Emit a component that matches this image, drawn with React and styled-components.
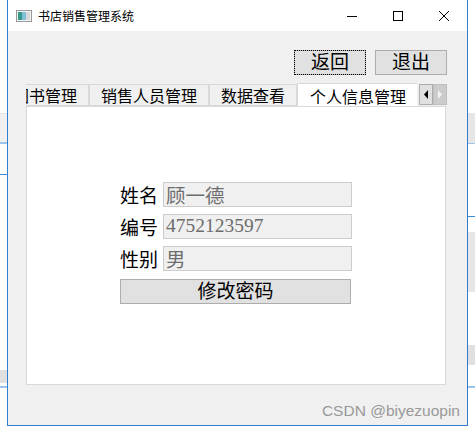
import styled, { createGlobalStyle } from "styled-components";

const GlobalStyle = createGlobalStyle`
  html, body {
    margin: 0;
    padding: 0;
    background: #ffffff;
  }
  * {
    box-sizing: border-box;
  }
`;

const CJK = `"Liberation Serif", "Noto Sans CJK SC", serif`;
const UI = `"Noto Sans CJK SC", "Liberation Sans", sans-serif`;

const Desktop = styled.div`
  width: 475px;
  height: 433px;
  display: flex;
  background:
    linear-gradient(#e6e6e6, #e6e6e6) 0 113px / 7px 1px no-repeat,
    linear-gradient(#f0f0f0, #f0f0f0) 0 114px / 7px 28px no-repeat,
    linear-gradient(#9cc3ea, #9cc3ea) 0 142px / 7px 2px no-repeat,
    linear-gradient(#3c8ad8, #3c8ad8) 0 174px / 7px 1px no-repeat,
    linear-gradient(#e0e0e0, #e0e0e0) 0 370px / 7px 13px no-repeat,
    linear-gradient(#9cc3ea, #9cc3ea) 0 386px / 7px 2px no-repeat,
    linear-gradient(#e6e6e6, #e6e6e6) 468px 113px / 7px 30px no-repeat,
    linear-gradient(#9cc3ea, #9cc3ea) 468px 142px / 7px 2px no-repeat,
    linear-gradient(#3c8ad8, #3c8ad8) 468px 216px / 7px 1px no-repeat,
    linear-gradient(#e6e6e6, #e6e6e6) 468px 232px / 7px 60px no-repeat,
    linear-gradient(#e0e0e0, #e0e0e0) 468px 345px / 7px 20px no-repeat,
    linear-gradient(#9cc3ea, #9cc3ea) 468px 386px / 7px 2px no-repeat,
    #ffffff;
`;

const Window = styled.div`
  margin-left: 7px;
  width: 461px;
  height: 426px;
  border: 1px solid #2f7fd0;
  border-top: none;
  display: flex;
  flex-direction: column;
  background: #f0f0f0;
`;

const TitleBar = styled.div`
  height: 31px;
  background: #ffffff;
  display: flex;
  align-items: center;
  padding-left: 8px;
  flex-shrink: 0;
`;

const TitleText = styled.span`
  font-family: ${UI};
  font-size: 12px;
  color: #000;
  margin-left: 6px;
  margin-top: -1px;
  flex: 1;
`;

const Controls = styled.div`
  display: flex;
  height: 100%;
`;

const Control = styled.div`
  width: 46px;
  height: 31px;
  display: flex;
  align-items: center;
  justify-content: center;
`;

const Client = styled.div`
  flex: 1;
  display: flex;
  flex-direction: column;
  padding: 19px 20px 0 18px;
  position: relative;
`;

const TopButtons = styled.div`
  display: flex;
  justify-content: flex-end;
  gap: 9px;
`;

const WinButton = styled.button`
  width: ${(p) => p.$w || 72}px;
  height: 25px;
  background: #e1e1e1;
  border: 1px solid #adadad;
  padding: 0;
  font-family: ${CJK};
  font-size: 19px;
  line-height: 1;
  color: #000;
  display: flex;
  align-items: center;
  justify-content: center;
  outline: ${(p) => (p.$focus ? "1px dotted #000" : "none")};
  outline-offset: -1px;
`;

const TabWidget = styled.div`
  margin-top: 8px;
  width: 421px;
  display: flex;
  flex-direction: column;
`;

const TabBar = styled.div`
  display: flex;
  align-items: flex-end;
  height: 23px;
  position: relative;
  z-index: 1;
`;

const TabStrip = styled.div`
  display: flex;
  overflow: hidden;
  width: 391px;
  align-items: flex-end;
  height: 24px;
  flex-shrink: 0;
`;

const Tab = styled.div`
  flex-shrink: 0;
  height: ${(p) => (p.$active ? 24 : 22)}px;
  margin-bottom: ${(p) => (p.$active ? -1 : 0)}px;
  padding: 0 ${(p) => p.$pad || 11}px;
  background: ${(p) => (p.$active ? "#ffffff" : "#f0f0f0")};
  border: 1px solid #d9d9d9;
  border-bottom: ${(p) => (p.$active ? "none" : "1px solid #d9d9d9")};
  border-left: ${(p) => (p.$first ? "none" : "1px solid #d9d9d9")};
  margin-left: ${(p) => (p.$shift ? p.$shift : 0)}px;
  font-family: ${UI};
  font-size: 16px;
  line-height: 20px;
  color: #000;
  display: flex;
  align-items: center;
  white-space: nowrap;
`;

const Scroller = styled.div`
  display: flex;
  margin-left: 2px;
  margin-bottom: 1px;
`;

const ScrollBtn = styled.div`
  width: 14px;
  height: 21px;
  background: ${(p) => (p.$disabled ? "#cccccc" : "#e1e1e1")};
  border: 1px solid ${(p) => (p.$disabled ? "#bfbfbf" : "#adadad")};
  display: flex;
  align-items: center;
  justify-content: center;
`;

const Panel = styled.div`
  width: 420px;
  height: 279px;
  background: #ffffff;
  border: 1px solid #d9d9d9;
  display: flex;
  align-items: center;
  justify-content: center;
  padding-bottom: 7px;
`;

const Form = styled.div`
  display: grid;
  grid-template-columns: 43px 189px;
  grid-auto-rows: 25px;
  row-gap: 7px;
  width: 232px;
`;

const Label = styled.div`
  font-family: ${CJK};
  font-size: 19px;
  color: #000;
  display: flex;
  align-items: center;
`;

const Field = styled.div`
  background: #f0f0f0;
  border: 1px solid #cccccc;
  font-family: ${CJK};
  font-size: 19.5px;
  color: #6d6d6d;
  display: flex;
  align-items: center;
  padding-left: 2px;
`;

const FullButton = styled(WinButton)`
  grid-column: 1 / span 2;
  width: 231px;
  margin-top: 1px;
`;

const Watermark = styled.div`
  position: absolute;
  right: 7px;
  bottom: 5px;
  font-family: "Liberation Sans", "DejaVu Sans", sans-serif;
  font-size: 15.5px;
  color: #999999;
`;

const fields = [
  { label: "姓名", value: "顾一德" },
  { label: "编号", value: "4752123597" },
  { label: "性别", value: "男" },
];

function AppIcon() {
  return (
    <svg width="16" height="14" viewBox="0 0 16 14">
      <rect x="0.5" y="1.5" width="15" height="11" fill="#f4f4f4" stroke="#9a9a9a" />
      <rect x="2" y="3" width="4" height="8" fill="#3a9a8a" />
      <rect x="6" y="3" width="4" height="8" fill="#7fbfd8" />
      <rect x="10" y="3" width="4" height="8" fill="#d8d8d8" />
    </svg>
  );
}

export default function App() {
  return (
    <>
      <GlobalStyle />
      <Desktop>
        <Window>
          <TitleBar>
            <AppIcon />
            <TitleText>书店销售管理系统</TitleText>
            <Controls>
              <Control>
                <svg width="12" height="12" viewBox="0 0 12 12">
                  <line x1="1" y1="6.5" x2="11" y2="6.5" stroke="#000" />
                </svg>
              </Control>
              <Control>
                <svg width="12" height="12" viewBox="0 0 12 12">
                  <rect x="1.5" y="1.5" width="9" height="9" fill="none" stroke="#000" />
                </svg>
              </Control>
              <Control>
                <svg width="12" height="12" viewBox="0 0 12 12">
                  <path d="M1 1 L11 11 M11 1 L1 11" stroke="#000" />
                </svg>
              </Control>
            </Controls>
          </TitleBar>
          <Client>
            <TopButtons>
              <WinButton $focus>返回</WinButton>
              <WinButton>退出</WinButton>
            </TopButtons>
            <TabWidget>
              <TabBar>
                <TabStrip>
                  <Tab $first $shift={-24}>图书管理</Tab>
                  <Tab>销售人员管理</Tab>
                  <Tab>数据查看</Tab>
                  <Tab $active $pad={12}>个人信息管理</Tab>
                </TabStrip>
                <Scroller>
                  <ScrollBtn>
                    <svg width="6" height="9" viewBox="0 0 6 9">
                      <path d="M5 0 L1 4.5 L5 9 Z" fill="#000" />
                    </svg>
                  </ScrollBtn>
                  <ScrollBtn $disabled>
                    <svg width="6" height="9" viewBox="0 0 6 9">
                      <path d="M1 0 L5 4.5 L1 9 Z" fill="#f4f4f4" />
                    </svg>
                  </ScrollBtn>
                </Scroller>
              </TabBar>
              <Panel>
                <Form>
                  {fields.map((f) => [
                    <Label key={f.label}>{f.label}</Label>,
                    <Field key={f.label + "v"}>{f.value}</Field>,
                  ])}
                  <FullButton>修改密码</FullButton>
                </Form>
              </Panel>
            </TabWidget>
            <Watermark>CSDN @biyezuopin</Watermark>
          </Client>
        </Window>
      </Desktop>
    </>
  );
}
